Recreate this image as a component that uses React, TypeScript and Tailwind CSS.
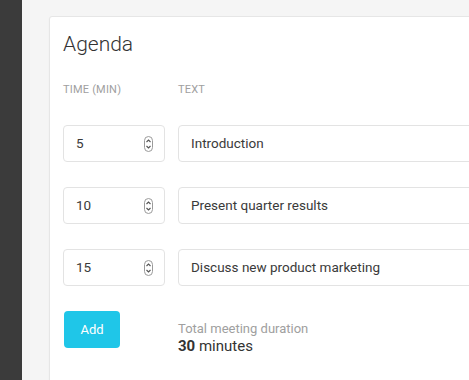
const rows = [
  { time: 5, text: 'Introduction' },
  { time: 10, text: 'Present quarter results' },
  { time: 15, text: 'Discuss new product marketing' },
];

function Spinner() {
  return (
    <svg width="9" height="16" viewBox="0 0 9 16" className="shrink-0">
      <rect x="0.5" y="0.5" width="8" height="15" rx="4" fill="none" stroke="#9a9a9a" strokeWidth="1" />
      <path d="M2.5 6 L4.5 4 L6.5 6" fill="none" stroke="#555" strokeWidth="1.1" />
      <path d="M2.5 10 L4.5 12 L6.5 10" fill="none" stroke="#555" strokeWidth="1.1" />
    </svg>
  );
}

export default function App() {
  const total = rows.reduce((sum, r) => sum + r.time, 0);

  return (
    <div className="flex h-[380px] w-[469px] overflow-hidden bg-[#f5f5f5] font-['Roboto',sans-serif]">
      <div className="w-[22px] shrink-0 bg-[#3b3b3b]" />
      <div className="flex-1 pl-[27px] pt-[16px]">
        <div className="h-[400px] w-[460px] rounded-tl-[3px] border border-[#e6e6e6] bg-white pl-[13px] pt-[14px] shadow-[0_1px_2px_rgba(0,0,0,0.04)]">
          <h1 className="text-[21px] font-light leading-[26px] text-[#333]">Agenda</h1>

          <div className="mt-[26px] flex text-[11px] leading-[14px] tracking-[0.2px] text-[#a0a0a0]">
            <div className="w-[115px]">TIME (MIN)</div>
            <div>TEXT</div>
          </div>

          <div className="mt-[28px] flex flex-col gap-[25px]">
            {rows.map((row) => (
              <div key={row.text} className="flex items-center">
                <div className="flex h-[37px] w-[102px] items-center justify-between rounded-[4px] border border-[#e3e3e3] pl-[12px] pr-[11px] text-[13.5px] text-[#3a3a3a]">
                  <span>{row.time}</span>
                  <Spinner />
                </div>
                <div className="ml-[13px] flex h-[37px] w-[320px] items-center rounded-[4px] border border-[#e3e3e3] pl-[12px] text-[13.5px] text-[#3a3a3a]">
                  {row.text}
                </div>
              </div>
            ))}
          </div>

          <div className="mt-[25px] flex items-start">
            <button className="ml-px h-[37px] w-[56px] rounded-[4px] bg-[#1fc6e8] text-[13px] text-white">
              Add
            </button>
            <div className="ml-[58px] mt-[10px]">
              <div className="text-[13px] leading-[16px] text-[#a0a0a0]">Total meeting duration</div>
              <div className="text-[15px] leading-[19px] text-[#333]">
                <span className="font-bold">{total}</span> minutes
              </div>
            </div>
          </div>
        </div>
      </div>
    </div>
  );
}
